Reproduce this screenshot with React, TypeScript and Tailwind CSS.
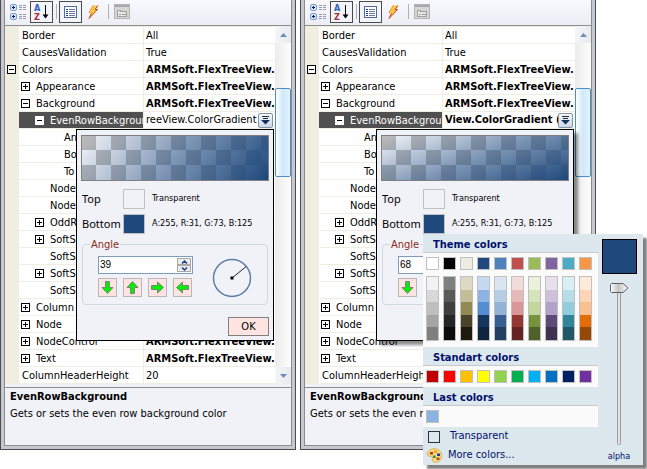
import { useState, type ReactNode } from "react";

type Row = {
  label: string;
  value?: string;
  level: number;
  state?: "open" | "closed";
  bold?: boolean;
};

const rowsTop: Row[] = [
  { label: "Border", value: "All", level: 0 },
  { label: "CausesValidation", value: "True", level: 0 },
  { label: "Colors", value: "ARMSoft.FlexTreeView.", level: 0, state: "open", bold: true },
  { label: "Appearance", value: "ARMSoft.FlexTreeView.", level: 1, state: "closed", bold: true },
  { label: "Background", value: "ARMSoft.FlexTreeView.", level: 1, state: "open", bold: true },
];

const rowsBottom: Row[] = [
  { label: "An", level: 3 },
  { label: "Bo", level: 3 },
  { label: "To", level: 3 },
  { label: "Node", level: 2 },
  { label: "Node", level: 2 },
  { label: "OddR", level: 2, state: "closed" },
  { label: "SoftS", level: 2, state: "closed" },
  { label: "SoftS", level: 2 },
  { label: "SoftS", level: 2, state: "closed" },
  { label: "SoftS", level: 2 },
  { label: "Column", level: 1, state: "closed" },
  { label: "Node", level: 1, state: "closed" },
  { label: "NodeControl", value: "ARMSoft.FlexTreeView.", level: 1, state: "closed", bold: true },
  { label: "Text", value: "ARMSoft.FlexTreeView.", level: 1, state: "closed", bold: true },
  { label: "ColumnHeaderHeight", value: "20", level: 0 },
];

const base = ["#ffffff", "#000000", "#eeece1", "#1f497d", "#4f81bd", "#c0504d", "#9bbb59", "#8064a2", "#4bacc6", "#f79646"];
const shades = [
  ["#f2f2f2", "#d8d8d8", "#bfbfbf", "#a5a5a5", "#7f7f7f"],
  ["#7f7f7f", "#595959", "#3f3f3f", "#262626", "#0c0c0c"],
  ["#ddd9c3", "#c4bd97", "#938953", "#494429", "#1d1b10"],
  ["#c6d9f0", "#8db3e2", "#548dd4", "#17365d", "#0f243e"],
  ["#dbe5f1", "#b8cce4", "#95b3d7", "#366092", "#244061"],
  ["#f2dcdb", "#e5b9b7", "#d99694", "#953734", "#632423"],
  ["#ebf1dd", "#d7e3bc", "#c3d69b", "#76923c", "#4f6128"],
  ["#e5e0ec", "#ccc1d9", "#b2a2c7", "#5f497a", "#3f3151"],
  ["#dbeef3", "#b7dde8", "#92cddc", "#31859b", "#205867"],
  ["#fdeada", "#fbd5b5", "#fac08f", "#e36c09", "#974806"],
];
const standard = ["#c00000", "#ff0000", "#ffc000", "#ffff00", "#92d050", "#00b050", "#00b0f0", "#0070c0", "#002060", "#7030a0"];

const indents = ["pl-[3px]", "pl-[2px]", "pl-4", "pl-[45px]"];

function Toggle({ open, light }: { open: boolean; light?: boolean }) {
  return (
    <button type="button" aria-label={open ? "Collapse" : "Expand"} className="block size-[9px] shrink-0">
      <svg viewBox="0 0 9 9" className="block size-[9px]" shapeRendering="crispEdges">
        <rect x=".5" y=".5" width="8" height="8" fill="#fff" stroke={light ? "#fff" : "#000"} />
        <path d={open ? "M2 4.5h5" : "M2 4.5h5M4.5 2v5"} stroke="#000" />
      </svg>
    </button>
  );
}

function GridRow({ row, labelWidth, selected, children }: { row: Row; labelWidth: string; selected?: boolean; children?: ReactNode }) {
  const root = row.level === 0;
  return (
    <tr className="h-[17px]">
      <td className="h-[17px] w-3.5 bg-[#f0eee0] p-0">
        {root && row.state && (
          <div className="flex pl-0.5">
            <Toggle open={row.state === "open"} />
          </div>
        )}
      </td>
      <td className={`h-[17px] p-0 ${labelWidth}`}>
        <div
          className={`flex h-[17px] items-center overflow-hidden border-b border-r border-[#f0eee0] leading-[18px] whitespace-nowrap ${indents[row.level]} ${
            selected ? "bg-[#505050] text-white" : ""
          }`}
        >
          {!root && row.level < 3 && (
            <span className="flex w-[15px] shrink-0">
              {row.state && <Toggle open={row.state === "open"} light={selected} />}
            </span>
          )}
          <span className="pt-px">{row.label}</span>
        </div>
      </td>
      <td className="h-[17px] p-0">
        {children ?? (
          <div
            className={`h-[17px] overflow-hidden border-b border-[#f0eee0] pl-0.5 leading-[18px] whitespace-nowrap ${row.bold ? "font-bold" : ""}`}
          >
            {row.value}
          </div>
        )}
      </td>
    </tr>
  );
}

function Toolbar() {
  return (
    <div className="flex h-[26px] items-center border-b border-[#8c8c8c] bg-linear-to-b from-[#f8f9fd] to-[#eceef5] pb-0.5 pl-[5px]">
      <button type="button" aria-label="Categorized">
        <svg viewBox="0 0 16 16" className="block size-4">
          <g fill="#d3e4f8" stroke="#7f9fc4">
            <rect x=".5" y=".5" width="6" height="6" rx="1.5" />
            <rect x=".5" y="9.500" width="6" height="6" rx="1.5" />
          </g>
          <path d="M2 3.500h3M3.500 2v3M2 12.500h3M3.500 11v3" stroke="#001a80" />
          <path d="M9 1.500h3M13 1.500h3M9 3.500h3M13 3.500h3M9 5.500h3M13 5.500h3M9 10.500h3M13 10.500h3M9 12.500h3M13 12.500h3M9 14.500h3M13 14.500h3" stroke="#9a9da8" />
        </svg>
      </button>
      <button type="button" aria-label="Alphabetical" className="ml-1 flex h-[22px] w-[23px] items-center justify-center border border-[#4a4a4a] bg-[#f3f4f8]">
        <svg viewBox="0 0 17 18" className="block h-[18px] w-[17px]" fontFamily="'DejaVu Sans Condensed','DejaVu Sans',sans-serif" fontWeight="bold" fontSize="9">
          <text x="1" y="8" fill="#2f5fc0">A</text>
          <text x="1" y="17" fill="#a0303c">Z</text>
          <path d="M12.500 2v12" stroke="#000" />
          <path d="M9.500 11.500h6l-3 4z" fill="#000" />
        </svg>
      </button>
      <span className="ml-[3px] h-[15px] w-px bg-[#b0b0b4]" />
      <button type="button" aria-label="Properties" className="ml-[2px] flex h-[22px] w-[23px] items-center justify-center border border-[#4a4a4a] bg-[#f3f4f8]">
        <svg viewBox="0 0 13 12" className="block h-3 w-[13px]" shapeRendering="crispEdges">
          <rect x=".5" y=".5" width="12" height="11" fill="#fff" stroke="#4c6a9c" />
          <path d="M2 3.500h2M2 5.500h2M2 7.500h2M2 9.500h2" stroke="#1c3c88" />
          <path d="M5 3.500h6M5 5.500h6M5 7.500h6M5 9.500h6" stroke="#6b7ba0" />
        </svg>
      </button>
      <button type="button" aria-label="Events" className="ml-1.5">
        <svg viewBox="0 0 11 14" className="block h-3.5 w-[11px]">
          <path d="M5 .5h5L7 4.500h2.500L1 13.500l2.500-5.500H.8z" fill="#f8c844" />
          <path d="M10 .5L7 4.500h2.500L1 13.500l2.500-5.500" fill="none" stroke="#c04a20" />
          <path d="M5 .5L.8 8" stroke="#e8923c" />
        </svg>
      </button>
      <span className="ml-[9px] h-[15px] w-px bg-[#b0b0b4]" />
      <button type="button" aria-label="Property pages" disabled className="ml-[5px]">
        <svg viewBox="0 0 16 15" className="block h-[15px] w-4" shapeRendering="crispEdges">
          <rect x=".5" y=".5" width="15" height="14" fill="#d6d6d6" stroke="#b4b4b4" />
          <path d="M1 2h14" stroke="#a8a8a8" strokeWidth="2" />
          <path d="M3.500 6.500h3v1h6v5h-9z" fill="#e6e6e6" stroke="#a0a0a0" />
          <path d="M5 10.500h2M8 10.500h4" stroke="#a0a0a0" />
        </svg>
      </button>
    </div>
  );
}

function ScrollBar() {
  return (
    <div className="flex w-4 shrink-0 flex-col bg-linear-to-r from-[#ececec] to-[#fdfdfd]">
      <button type="button" aria-label="Scroll up" className="flex h-[17px] items-center justify-center bg-linear-to-r from-[#f4f5f7] to-[#e8eaee]">
        <svg viewBox="0 0 7 4" className="block h-1 w-[7px]"><path d="M0 4L3.500 0L7 4z" fill="#6d8cba" /></svg>
      </button>
      <div className="flex-1 pt-[45px]">
        <div className="h-[89px] rounded-xs border border-[#4b8fc4] bg-linear-to-r from-white via-[#cfe8fb] to-[#e4f3fe]" />
      </div>
      <button type="button" aria-label="Scroll down" className="flex h-[17px] items-center justify-center bg-linear-to-r from-[#f4f5f7] to-[#e8eaee]">
        <svg viewBox="0 0 7 4" className="block h-1 w-[7px]"><path d="M0 0L3.500 4L7 0z" fill="#6d8cba" /></svg>
      </button>
    </div>
  );
}

function Checker({ id, angle }: { id: string; angle: number }) {
  const a = (angle * Math.PI) / 180;
  const w = 186;
  const h = 44;
  const half = (w * Math.cos(a) + h * Math.sin(a)) / 2;
  const dx = half * Math.cos(a);
  const dy = half * Math.sin(a);
  const cells: ReactNode[] = [];
  for (let r = 0; r < 3; r++)
    for (let c = 0; c < 13; c++)
      if ((r + c) % 2 === 0) cells.push(<rect key={`${r}-${c}`} x={c * 15 - 1} y={r * 15 - 1} width="15" height="15" />);
  return (
    <svg viewBox={`0 0 ${w} ${h}`} className="block h-[46px] w-[188px] border border-[#808080] bg-[#f4f5fa]">
      <defs>
        <linearGradient id={id} gradientUnits="userSpaceOnUse" x1={w / 2 - dx} y1={h / 2 - dy} x2={w / 2 + dx} y2={h / 2 + dy}>
          <stop offset="0" stopColor="#1f497d" stopOpacity="0" />
          <stop offset=".5" stopColor="#1f497d" stopOpacity=".55" />
          <stop offset="1" stopColor="#1f497d" />
        </linearGradient>
      </defs>
      <g fill="#bcbcbc" shapeRendering="crispEdges">{cells}</g>
      <rect width={w} height={h} fill={`url(#${id})`} />
    </svg>
  );
}

const arrowTurns = ["", "rotate-180", "-rotate-90", "rotate-90"];
const arrowNames = ["Down", "Up", "Right", "Left"];

function GradientPopup({ id, angle, shadow, children }: { id: string; angle: number; shadow?: boolean; children?: ReactNode }) {
  const [value, setValue] = useState(String(angle));
  const a = (angle * Math.PI) / 180;
  return (
    <div
      className={`absolute top-full right-px z-20 mt-px flex w-[198px] flex-col border border-black bg-[#f1f2f8] px-1 pt-[5px] pb-1 ${
        shadow ? "shadow-[4px_4px_3px_rgba(0,0,0,0.45)]" : ""
      }`}
    >
      <Checker id={id} angle={angle} />
      <div className="mt-2 flex flex-col gap-[5px] text-[9px] text-black">
        <div className="flex h-5 items-center">
          <label htmlFor={`${id}-top`} className="w-[42px] pl-px font-['Noto_Sans',sans-serif] text-[11px]">Top</label>
          <button type="button" id={`${id}-top`} className="h-5 w-[22px] border border-[#c0c0c0]" />
          <span className="pl-[7px]">Transparent</span>
        </div>
        <div className="flex h-5 items-center">
          <label htmlFor={`${id}-bottom`} className="w-[42px] pl-px font-['Noto_Sans',sans-serif] text-[11px]">Bottom</label>
          <div className="relative">
            <button type="button" id={`${id}-bottom`} className="block h-5 w-[22px] border border-[#c0c0c0] bg-[#1f497d]" />
            {children}
          </div>
          <span className="pl-[7px] whitespace-nowrap">A:255, R:31, G:73, B:125</span>
        </div>
      </div>
      <fieldset className="mr-px ml-px mt-1 h-[67px] rounded border border-[#d0d8e0] px-[15px] pt-0">
        <legend className="-ml-2 px-px text-[11px] leading-[13px] text-[#8b2a1a]">Angle</legend>
        <div className="flex justify-between pt-[5px]">
          <div className="flex flex-col gap-1">
            <div className="flex h-[18px] w-[95px] items-center border border-[#7f9db9] bg-white pr-px">
              <input
                aria-label="Angle"
                value={value}
                onChange={(e) => setValue(e.target.value)}
                className="w-full min-w-0 flex-1 px-px font-['Liberation_Sans',Arial,sans-serif] text-[10px] leading-3 outline-none"
              />
              <div className="flex flex-col">
                {["Increase", "Decrease"].map((n, i) => (
                  <button key={n} type="button" aria-label={n} className="flex h-[7px] w-3.5 items-center justify-center border border-[#a8a8a8] bg-[#ececec]">
                    <svg viewBox="0 0 7 4" className={`block h-1 w-[7px] ${i ? "rotate-180" : ""}`}>
                      <path d="M1 3.500L3.500 1L6 3.500" fill="none" stroke="#1c3f80" strokeWidth="1.500" />
                    </svg>
                  </button>
                ))}
              </div>
            </div>
            <div className="flex gap-1.5">
              {arrowNames.map((n, i) => (
                <button key={n} type="button" aria-label={n} className="flex size-[19px] items-center justify-center border border-[#b8b8b8] bg-[#ffe4e1]">
                  <svg viewBox="0 0 13 13" className={`block size-[13px] ${arrowTurns[i]}`}>
                    <path d="M4.500 .5h4v6h3.500L6.500 12.500L1 6.500h3.500z" fill="#00f000" stroke="#808080" />
                  </svg>
                </button>
              ))}
            </div>
          </div>
          <svg viewBox="0 0 40 40" className="mt-0.5 block size-10">
            <circle cx="20" cy="20" r="18.500" fill="none" stroke="#5d7ca3" strokeWidth="1.500" />
            <path d={`M20 20L${20 + 18 * Math.cos(a)} ${20 - 18 * Math.sin(a)}`} stroke="#222" />
            <rect x="18.500" y="18.500" width="3" height="3" />
          </svg>
        </div>
      </fieldset>
      <button type="button" className="mt-3 h-[19px] w-[41px] self-end border border-[#808080] bg-[#ffe4e1] text-[11px] leading-4">OK</button>
    </div>
  );
}

function Swatches({ colors }: { colors: string[] }) {
  return (
    <div className="flex gap-1">
      {colors.map((c) => (
        <button key={c} type="button" aria-label={c} className="size-[13px] border border-[#c0c0c0]" style={{ backgroundColor: c }} />
      ))}
    </div>
  );
}

function PaletteTitle({ children }: { children: string }) {
  return <h3 className="h-[19px] border-b border-[#c8c8c8] pt-px pl-2.5 text-[11px] leading-5 font-bold">{children}</h3>;
}

function Palette() {
  return (
    <div className="absolute top-full left-0 z-30 flex h-[231px] w-[220px] bg-[#dde7ee] font-['DejaVu_Sans_Condensed','DejaVu_Sans',sans-serif] text-[11px] text-[#00106b] shadow-[4px_4px_2px_rgba(0,0,0,0.5)]">
      <div className="w-[175px]">
        <PaletteTitle>Theme colors</PaletteTitle>
        <div className="h-[94px] bg-[#fafafa] px-[3px] pt-1">
          <Swatches colors={base} />
          <div className="mt-1.5 flex gap-1">
            {shades.map((col) => (
              <div key={col[0] + col[1]} className="flex h-[65px] w-[13px] flex-col border border-[#c0c0c0]">
                {col.map((c) => (
                  <button key={c} type="button" aria-label={c} className="w-full flex-1" style={{ backgroundColor: c }} />
                ))}
              </div>
            ))}
          </div>
        </div>
        <PaletteTitle>Standart colors</PaletteTitle>
        <div className="h-[21px] bg-[#fafafa] px-[3px] pt-1">
          <Swatches colors={standard} />
        </div>
        <PaletteTitle>Last colors</PaletteTitle>
        <div className="h-[21px] bg-[#fafafa] px-[3px] pt-1">
          <Swatches colors={["#8db3e2"]} />
        </div>
        <button type="button" className="flex h-[19px] items-center gap-2.5 pl-[5px]">
          <span className="size-3 border border-[#333]" />
          Transparent
        </button>
        <button type="button" className="flex h-[18px] items-center gap-1.5 pl-1">
          <svg viewBox="0 0 15 15" className="block size-[15px]">
            <path d="M7 .8C3 .8.6 3.500.6 6c0 1.800 1.300 2.500 3 2.300 1.600-.2 2.200.6 1.800 2C4.800 12.800 6 14.300 8.500 14.300c3.500 0 6-3 6-6.600C14.500 3.500 11.500.8 7 .8z" fill="#f5dc84" stroke="#dcae48" />
            <rect x="3" y="4" width="3" height="2.500" fill="#c83018" />
            <rect x="7" y="2.500" width="3" height="2.500" fill="#f8a020" />
            <rect x="10" y="5.500" width="3" height="2.500" fill="#203c98" />
            <rect x="9.500" y="9.500" width="3" height="2.500" fill="#c84020" />
            <rect x="6" y="7.500" width="2.500" height="2.500" fill="#30903c" />
          </svg>
          More colors...
        </button>
      </div>
      <div className="flex flex-1 flex-col items-center pt-[5px] pr-[3px]">
        <div className="size-[35px] border border-black bg-[#1f497d]" />
        <div className="relative mt-[9px]">
          <svg viewBox="0 0 19 162" className="block h-[162px] w-[19px]">
            <defs>
              <linearGradient id="thumb">
                <stop offset="0" stopColor="#fff" />
                <stop offset=".45" stopColor="#c4c4c4" />
                <stop offset="1" stopColor="#fff" />
              </linearGradient>
            </defs>
            <rect x="7.500" y="5.500" width="3" height="156" rx="1" fill="#e4e4e8" stroke="#9a9aa0" />
            <path d="M1.500 .5h11.500l5 4.500l-5 4.500H1.500l-1-1v-7z" fill="url(#thumb)" stroke="#5c6068" />
          </svg>
          <input id="alpha" type="range" min={0} max={255} defaultValue={255} className="absolute inset-0 h-full w-full opacity-0" />
        </div>
        <label htmlFor="alpha" className="mt-[5px] text-[9px] leading-3">alpha</label>
      </div>
    </div>
  );
}

function PropertyWindow({ id, labelWidth, value, bold, angle, shadow, children }: {
  id: string;
  labelWidth: string;
  value: string;
  bold?: boolean;
  angle: number;
  shadow?: boolean;
  children?: ReactNode;
}) {
  return (
    <section className="min-w-0 flex-1 border-x border-b border-[#4c4c50] bg-[#c5c8d0] px-[3px] pb-[3px]">
      <div className="border-x border-b border-[#8c8c8c] bg-[#f1f2f8]">
        <Toolbar />
        <div className="flex bg-white">
          <div className="min-w-0 flex-1 border-t border-[#f0eee0]">
            <table className="w-full table-fixed border-collapse">
              <colgroup>
                <col className="w-3.5" />
                <col className={labelWidth} />
                <col />
              </colgroup>
              <tbody>
                {rowsTop.map((r) => (
                  <GridRow key={r.label} row={r} labelWidth={labelWidth} />
                ))}
                <GridRow row={{ label: "EvenRowBackground", level: 2, state: "open" }} labelWidth={labelWidth} selected>
                  <div className="relative flex h-[17px] items-center border-b border-[#f0eee0] pr-0.5">
                    <input
                      aria-label="EvenRowBackground"
                      defaultValue={value}
                      className={`h-4 min-w-0 flex-1 pt-px pl-0.5 outline-none ${bold ? "font-bold" : ""}`}
                    />
                    <button type="button" aria-label="Open editor" className="flex size-[15px] shrink-0 items-center justify-center rounded-xs border border-[#8593a8] bg-linear-to-b from-[#f4f8fc] to-[#ccd8e6]">
                      <svg viewBox="0 0 9 9" className="block size-[9px]">
                        <path d="M1 0.500h7M2 2.500h5" stroke="#222c3c" />
                        <path d="M0 4h9L4.500 8.500z" fill="#16305c" />
                      </svg>
                    </button>
                    <GradientPopup id={id} angle={angle} shadow={shadow}>
                      {children}
                    </GradientPopup>
                  </div>
                </GridRow>
                {rowsBottom.map((r, i) => (
                  <GridRow key={i} row={r} labelWidth={labelWidth} />
                ))}
              </tbody>
            </table>
          </div>
          <ScrollBar />
        </div>
        <div className="-mt-px h-[5px] border-y border-[#8c8c8c] bg-[#f1f2f8]" />
        <div className="h-[57px] px-[5px] pt-px">
          <h2 className="leading-4 font-bold">EvenRowBackground</h2>
          <p className="leading-[18px] whitespace-nowrap">Gets or sets the even row background color</p>
        </div>
      </div>
    </section>
  );
}

export default function App() {
  return (
    <main className="flex min-h-screen items-start gap-1 bg-white pr-[51px] font-['DejaVu_Sans_Condensed','DejaVu_Sans',sans-serif] text-[11px] text-black">
      <PropertyWindow id="left" labelWidth="w-[125px]" value="reeView.ColorGradient" angle={39} />
      <PropertyWindow id="right" labelWidth="w-[124px]" value="View.ColorGradient (" bold angle={68} shadow>
        <Palette />
      </PropertyWindow>
    </main>
  );
}
